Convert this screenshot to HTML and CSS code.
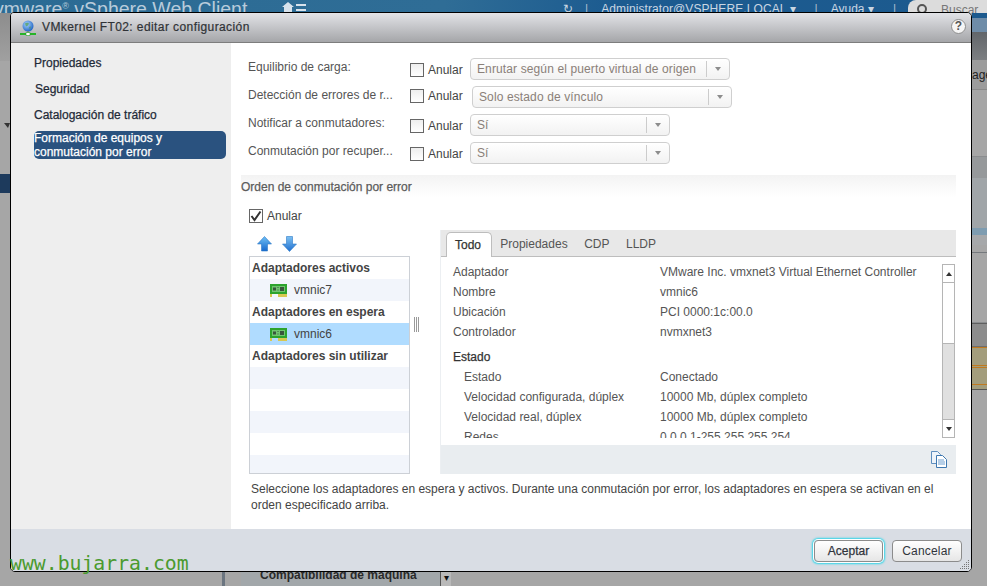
FILE: index.html
```html
<!DOCTYPE html>
<html lang="es">
<head>
<meta charset="utf-8">
<title>VMkernel FT02: editar configuración</title>
<link rel="stylesheet" href="styles.css">
</head>
<body>
<div class="app">
  <header class="topbar">
    <span class="brand"><b class="brand-vm">vmware</b><sup class="brand-r">®</sup> vSphere Web Client</span>
    <svg class="home" width="24" height="12" viewBox="0 0 24 12"><path d="M6 1 L12 6 H10 V12 H2 V6 H0 Z" fill="#d7e2ec"/><path d="M14 3h10v2H14zM14 8h10v2H14z" fill="#d7e2ec"/></svg>
    <span class="top-right">
      <span class="refresh">↻</span><span class="sep">|</span>
      <span class="user">Administrator@VSPHERE.LOCAL ▾</span><span class="sep">|</span>
      <span class="help-menu">Ayuda ▾</span><span class="sep">|</span>
      <span class="search"><svg width="12" height="12" viewBox="0 0 12 12"><circle cx="6" cy="6" r="4" fill="none" stroke="#555" stroke-width="2"/></svg><span class="search-text">Buscar</span></span>
    </span>
  </header>
  <div class="workspace">
    <div class="left-strip">
      <div class="ls-a"></div>
      <div class="ls-tri"></div>
      <div class="ls-b"></div>
      <div class="ls-blue"></div>
    </div>
    <div class="center-back">
      <div class="back-row">
        <span class="back-slate"></span>
        <span class="back-panel">Compatibilidad de máquina</span>
        <span class="back-drop">▾</span>
      </div>
    </div>
    <div class="right-strip">
      <div class="rs-blue"></div>
      <div class="rs-steel"></div>
      <div class="rs-dark"></div>
      <div class="rs-tab">age</div>
      <div class="rs-plain"></div>
      <div class="rs-mid"></div>
      <div class="rs-soft"></div>
      <div class="rs-band"></div>
      <div class="rs-plain2"></div>
      <div class="rs-grey"></div>
      <div class="rs-tan"></div>
    </div>
  </div>
</div>

<section class="dialog">
  <div class="titlebar">
    <svg class="title-icon" width="16" height="16" viewBox="0 0 16 16">
      <defs><radialGradient id="gl" cx="40%" cy="35%" r="70%"><stop offset="0" stop-color="#a8d4ff"/><stop offset="1" stop-color="#1a5fc0"/></radialGradient></defs>
      <circle cx="8" cy="6" r="5.5" fill="url(#gl)"/>
      <path d="M5 3.5c1.5-1 3-.8 4 0l-1 2-2 1zM9 7l2-.5-1 3z" fill="#4f9a4a" opacity=".7"/>
      <path d="M7 11h2v2H7z" fill="#7a8a7a"/>
      <path d="M0 13h16v2H0z" fill="#27b427"/>
      <path d="M6 12.5h4v3H6z" fill="#fff" stroke="#27a027" stroke-width=".6"/>
    </svg>
    <h1 class="title-text">VMkernel FT02: editar configuración</h1>
    <span class="help-btn">?</span>
  </div>

  <div class="dlg-body">
    <nav class="sidebar">
      <a class="nav-item">Propiedades</a>
      <a class="nav-item nav-shift">Seguridad</a>
      <a class="nav-item">Catalogación de tráfico</a>
      <a class="nav-selected">Formación de equipos y conmutación por error</a>
    </nav>

    <main class="main">
      <div class="form">
        <div class="row">
          <label class="row-label">Equilibrio de carga:</label>
          <span class="override"><span class="cb"></span><span class="cb-text">Anular</span></span>
          <span class="select wide"><span class="sel-text">Enrutar según el puerto virtual de origen</span><span class="sel-arrow"></span></span>
        </div>
        <div class="row row-alt">
          <label class="row-label">Detección de errores de r...</label>
          <span class="override"><span class="cb"></span><span class="cb-text">Anular</span></span>
          <span class="select wide"><span class="sel-text">Solo estado de vínculo</span><span class="sel-arrow"></span></span>
        </div>
        <div class="row">
          <label class="row-label">Notificar a conmutadores:</label>
          <span class="override"><span class="cb"></span><span class="cb-text">Anular</span></span>
          <span class="select narrow"><span class="sel-text">Sí</span><span class="sel-arrow"></span></span>
        </div>
        <div class="row">
          <label class="row-label">Conmutación por recuper...</label>
          <span class="override"><span class="cb"></span><span class="cb-text">Anular</span></span>
          <span class="select narrow"><span class="sel-text">Sí</span><span class="sel-arrow"></span></span>
        </div>
      </div>

      <h2 class="section-head">Orden de conmutación por error</h2>

      <div class="override-main">
        <span class="cb cb-on"><svg width="14" height="14" viewBox="0 0 14 14"><path d="M2.5 7 L5.5 11 L11.5 2.5" fill="none" stroke="#333" stroke-width="2"/></svg></span>
        <span class="cb-text">Anular</span>
      </div>

      <div class="split">
        <div class="adapters">
          <div class="arrows">
            <svg width="15" height="16" viewBox="0 0 15 16"><defs><linearGradient id="au" x1="0" y1="0" x2="0" y2="1"><stop offset="0" stop-color="#6fc0f5"/><stop offset="1" stop-color="#1668cc"/></linearGradient></defs><path d="M7.5 .5 L14.5 8 H10.5 V15 H4.5 V8 H.5 Z" fill="url(#au)" stroke="#2b78c8" stroke-width=".6"/></svg>
            <svg width="15" height="16" viewBox="0 0 15 16"><defs><linearGradient id="ad" x1="0" y1="0" x2="0" y2="1"><stop offset="0" stop-color="#7cc0f2"/><stop offset="1" stop-color="#2070d0"/></linearGradient></defs><path d="M4.5 .5 H10.5 V8 H14.5 L7.5 15.5 L.5 8 H4.5 Z" fill="url(#ad)" stroke="#2b78c8" stroke-width=".6"/></svg>
          </div>
          <ul class="list">
            <li class="li-head">Adaptadores activos</li>
            <li class="li-nic li-alt"><svg class="nic" width="17" height="13" viewBox="0 0 17 13"><path d="M0 0h17v10H0z" fill="#2da32d"/><path d="M2 2h13v6H2z" fill="#6fc46f"/><path d="M3 3.500h3v3H3zM7.500 3h1v1h-1zM7.500 5.500h1v1h-1zM10 3h4v4h-4z" fill="#39553c"/><path d="M0 10h2v3H0zM8 10h9v3H8z" fill="#d8c850"/></svg>vmnic7</li>
            <li class="li-head">Adaptadores en espera</li>
            <li class="li-nic li-sel"><svg class="nic" width="17" height="13" viewBox="0 0 17 13"><path d="M0 0h17v10H0z" fill="#2da32d"/><path d="M2 2h13v6H2z" fill="#6fc46f"/><path d="M3 3.500h3v3H3zM7.500 3h1v1h-1zM7.500 5.500h1v1h-1zM10 3h4v4h-4z" fill="#39553c"/><path d="M0 10h2v3H0zM8 10h9v3H8z" fill="#d8c850"/></svg>vmnic6</li>
            <li class="li-head">Adaptadores sin utilizar</li>
            <li class="li-alt"></li>
            <li></li>
            <li class="li-alt"></li>
            <li></li>
            <li class="li-alt"></li>
          </ul>
        </div>

        <div class="gutter"><span class="grip"></span></div>

        <div class="details">
          <div class="tabs">
            <span class="tab tab-on">Todo</span>
            <span class="tab">Propiedades</span>
            <span class="tab">CDP</span>
            <span class="tab">LLDP</span>
          </div>
          <div class="det-content">
            <div class="scroller">
              <dl class="props">
                <dt>Adaptador</dt><dd>VMware Inc. vmxnet3 Virtual Ethernet Controller</dd>
                <dt>Nombre</dt><dd>vmnic6</dd>
                <dt>Ubicación</dt><dd>PCI 0000:1c:00.0</dd>
                <dt>Controlador</dt><dd>nvmxnet3</dd>
              </dl>
              <div class="props-head">Estado</div>
              <dl class="props props-in">
                <dt>Estado</dt><dd>Conectado</dd>
                <dt>Velocidad configurada, dúplex</dt><dd>10000 Mb, dúplex completo</dd>
                <dt>Velocidad real, dúplex</dt><dd>10000 Mb, dúplex completo</dd>
                <dt>Redes</dt><dd>0.0.0.1-255.255.255.254</dd>
              </dl>
            </div>
            <div class="scrollbar">
              <span class="sb-btn"><i class="tri-up"></i></span>
              <span class="sb-thumb"></span>
              <span class="sb-track"></span>
              <span class="sb-btn"><i class="tri-down"></i></span>
            </div>
          </div>
          <div class="det-foot">
            <svg width="16" height="17" viewBox="0 0 16 17"><path d="M.5 .5h6l3 3v9h-9z" fill="#eef4fa" stroke="#5f8fbf"/><path d="M5.500 4.500h6l4 4v8h-10z" fill="#fff" stroke="#3f78b0"/><path d="M7 9h6M7 11h7M7 13h7" stroke="#6f9fcf"/></svg>
          </div>
        </div>
      </div>

      <p class="hint">Seleccione los adaptadores en espera y activos. Durante una conmutación por error, los adaptadores en espera se activan en el orden especificado arriba.</p>
    </main>
  </div>

  <footer class="dlg-foot">
    <button class="btn btn-focus">Aceptar</button>
    <button class="btn">Cancelar</button>
  </footer>
  <svg class="resize" width="10" height="10" viewBox="0 0 10 10"><path d="M8 0h1v1H8zM6 2h1v1H6zM8 2h1v1H8zM4 4h1v1H4zM6 4h1v1H6zM8 4h1v1H8zM2 6h1v1H2zM4 6h1v1H4zM6 6h1v1H6zM8 6h1v1H8zM0 8h1v1H0zM2 8h1v1H2zM4 8h1v1H4zM6 8h1v1H6zM8 8h1v1H8z" fill="#777"/></svg>
</section>

<div class="watermark">www.bujarra.com</div>
</body>
</html>
```
FILE: styles.css
```css
* { box-sizing: border-box; }
html, body { margin: 0; height: 100%; overflow: hidden; }
body { font: 12px/16px "Liberation Sans", Arial, sans-serif; color: #444; background: #a6a6a6; }

/* background application */
.app { display: flex; flex-direction: column; height: 586px; }
.topbar { height: 13px; flex: none; overflow: hidden; display: flex; background: linear-gradient(100deg, #2b6b94 0, #2f6d96 45%, #1c5b90 62%, #1c5a8e 100%); color: #c9d6e2; white-space: nowrap; }
.brand { font-size: 19.5px; line-height: 19px; margin-left: -6px; width: 288px; flex: none; color: #b9cbdb; }
.brand-vm { font-weight: 400; }
.brand-r { font-size: 9px; line-height: 0; }
.home { margin-top: 1px; flex: none; }
.top-right { margin-left: auto; display: flex; font-size: 12px; line-height: 16px; padding-top: 1px; }
.refresh { margin-right: 12px; }
.sep { color: #a9bccd; }
.user { margin: 0 19px 0 13px; letter-spacing: .09px; }
.help-menu { margin: 0 19px 0 13px; }
.search { margin-left: 12px; width: 79px; height: 24px; margin-top: -1px; background: #dcdcdc; border-radius: 8px 0 0 8px; display: flex; padding: 2px 0 0 7px; color: #777; }
.search svg { margin: 1px 0 0 1px; }
.search-text { margin-left: 13px; }

.workspace { flex: 1; display: flex; min-height: 0; }
.left-strip { width: 10px; flex: none; display: flex; flex-direction: column; }
.ls-a { height: 48px; background: linear-gradient(#8d8d8d, #a0a0a0); }
.ls-tri { margin-top: 62px; width: 0; height: 0; align-self: flex-end; border: 5px solid transparent; border-top-color: #333; border-right-width: 2px; border-left-width: 4px; border-bottom-width: 0; }
.ls-b { height: 46px; }
.ls-blue { height: 19px; background: #1d3a5c; }
.center-back { flex: 1; display: flex; flex-direction: column; justify-content: flex-end; }
.back-row { display: flex; height: 14px; overflow: hidden; }
.back-slate { width: 3px; margin-left: 212px; background: #6b7580; }
.back-panel { width: 199px; margin-left: 16px; background: #a2a7aa; padding-left: 19px; font-weight: 700; color: #2a2a2a; line-height: 6px; white-space: nowrap; }
.back-drop { width: 11px; background: #b9b9b9; border-left: 1px solid #555; color: #111; font-size: 10px; line-height: 12px; text-align: center; }
.right-strip { width: 15px; flex: none; display: flex; flex-direction: column; }
.rs-blue { height: 5px; background: #1c5a8e; }
.rs-steel { height: 14px; background: #6e8ca8; }
.rs-dark { height: 28px; background: linear-gradient(#62666a, #7c7f82); }
.rs-tab { height: 30px; background: #9c9c9c; color: #222; line-height: 30px; margin-left: -10px; padding-left: 10px; white-space: nowrap; overflow: hidden; clip-path: inset(0 0 0 10px); border-bottom: 1px solid #8a8a8a; }
.rs-plain { height: 67px; border-bottom: 1px solid #8b8d8f; background: #a6a6a6; }
.rs-mid { height: 21px; background: #96999b; }
.rs-soft { height: 67px; background: linear-gradient(#a0a5a8 0, #a0a5a8 75%, #7e9cb0 75%, #7e9cb0 85%, #a6a8aa 85%); }
.rs-band { height: 8px; border-bottom: 1px solid #75797d; }
.rs-plain2 { height: 70px; border-bottom: 1px solid #8b8d8f; }
.rs-grey { height: 24px; background: #8c8c8c; border-top: 1px solid #5f5f5f; border-bottom: 1px solid #6f6f6f; }
.rs-tan { height: 43px; background: #a39d7c; border-top: 1px solid #c07a20; border-bottom: 1px solid #555; background-image: linear-gradient(transparent 17px, #c07a20 17px, #c07a20 18px, transparent 18px, transparent 19px, #c07a20 19px, #c07a20 20px, transparent 20px, transparent 36px, #c07a20 36px, #c07a20 37px, transparent 37px); }

/* dialog */
.dialog { position: absolute; left: 10px; top: 12px; width: 962px; height: 560px; border: 1px solid #000; border-radius: 4px 5px 5px 5px; overflow: hidden; display: flex; flex-direction: column; background: #fff; }
.titlebar { height: 30px; flex: none; display: flex; align-items: center; background: linear-gradient(#e2e3e7, #a5a6a9); border-bottom: 1px solid #7d7d7d; padding: 0 5px 2px 9px; }
.title-icon { flex: none; margin-top: 3px; }
.title-text { margin: 0 0 0 6px; font-size: 12px; font-weight: 400; color: #2f3236; letter-spacing: .41px; -webkit-text-stroke: .2px #2f3236; flex: 1; }
.help-btn { width: 15px; height: 15px; border: 1.5px solid #8e8e8e; border-radius: 50%; background: #f5f5f5; color: #555; font-weight: 700; font-size: 12px; line-height: 12px; text-align: center; }

.dlg-body { flex: 1; display: flex; min-height: 0; }
.sidebar { width: 220px; flex: none; background: #eee; padding: 7px 5px 0 23px; display: flex; flex-direction: column; color: #1f2a38; }
.nav-item { height: 26px; line-height: 26px; -webkit-text-stroke: .25px #1f2a38; }
.nav-shift { padding-left: 1px; }
.nav-selected { margin-top: 3px; height: 28px; background: #2a527f; border-radius: 5px; color: #fff; line-height: 14px; -webkit-text-stroke: .25px #fff; }

.main { flex: 1; min-width: 0; padding: 15px 15px 0 10px; display: flex; flex-direction: column; background: #fff; }
.form { padding-left: 7px; display: flex; flex-direction: column; gap: 6px; }
.row { display: flex; height: 22px; }
.row-label { width: 162px; flex: none; padding-top: 1px; color: #555; }
.override { width: 60px; flex: none; display: flex; align-items: center; gap: 4px; padding-top: 2px; }
.cb { width: 14px; height: 14px; flex: none; display: block; border: 1px solid #666; background: linear-gradient(#eee, #fff); }
.cb-text { color: #444; }
.row-alt .override { padding-top: 0; margin-top: -1px; height: 22px; width: 62px; }
.select { height: 22px; display: flex; border: 1px solid #cfcfcf; border-radius: 4px; background: linear-gradient(#fff, #f2f2f2); color: #8a8078; align-items: center; }
.wide { width: 260px; }
.narrow { width: 200px; }
.sel-text { flex: 1; padding-left: 6px; letter-spacing: .12px; white-space: nowrap; overflow: hidden; }
.sel-arrow { width: 23px; height: 16px; border-left: 1px solid #ccc; position: relative; flex: none; }
.sel-arrow::after { content: ""; position: absolute; left: 8px; top: 6px; border: 3.5px solid transparent; border-top: 4px solid #8d8d8d; border-bottom: 0; }

.section-head { margin: 11px 0 0; height: 22px; line-height: 24px; font-size: 12px; font-weight: 400; color: #5c5c5c; -webkit-text-stroke: .25px #5c5c5c; background: linear-gradient(#f3f3f3, #fff); }

.override-main { margin: 12px 0 0 8px; height: 14px; display: flex; align-items: center; gap: 4px; }
.cb-on { background: #fff; }
.cb-on svg { display: block; margin: -1px; }

.split { margin-top: 7px; height: 244px; display: flex; flex: none; }
.adapters { margin-left: 8px; width: 161px; flex: none; display: flex; flex-direction: column; }
.arrows { height: 26px; flex: none; padding: 6px 0 0 8px; display: flex; gap: 10px; }
.list { margin: 0; padding: 0; list-style: none; height: 218px; border: 1px solid #ccd0d6; overflow: hidden; }
.list li { height: 22px; line-height: 22px; padding-left: 2px; }
.li-head { font-weight: 700; color: #444; }
.list .li-nic { padding-left: 20px; display: flex; align-items: center; color: #444; }
.nic { margin-right: 7px; flex: none; margin-top: 1px; }
.li-alt { background: #f2f5fb; }
.li-sel { background: #b0dcff; }
.gutter { width: 30px; flex: none; padding: 87px 0 0 4px; }
.grip { display: block; width: 5px; height: 15px; background: repeating-linear-gradient(90deg, #9a9a9a 0, #9a9a9a 1px, #fff 1px, #fff 2px); }
.details { flex: 1; min-width: 0; display: flex; flex-direction: column; border-left: 1px solid #eceff2; }
.tabs { height: 27px; flex: none; display: flex; background: #e8e8e8; border-bottom: 1px solid #bdbdbd; padding: 2px 0 0 5px; color: #555; }
.tab { line-height: 22px; padding: 1px 8.25px 0; }
.tab-on { width: 46px; height: 25px; background: #fff; border: 1px solid #bdbdbd; border-bottom: 0; border-radius: 5px 5px 0 0; color: #333; padding: 1px 0 0 8px; -webkit-text-stroke: .25px #333; }
.det-content { flex: 1; min-height: 0; display: flex; overflow: hidden; }
.scroller { flex: 1; min-width: 0; overflow: hidden; margin-bottom: 7px; padding: 5px 0 0 12px; color: #555; }
.props { margin: 0; display: grid; grid-template-columns: 207px 1fr; }
.props dt, .props dd { margin: 0; line-height: 20px; white-space: nowrap; }
.props-in dt { padding-left: 11px; }
.props-head { margin-top: 5px; line-height: 20px; color: #333; -webkit-text-stroke: .25px #333; }
.scrollbar { width: 13px; flex: none; margin: 7px 1px 7px 0; display: flex; flex-direction: column; border: 1px solid #b5b5b5; }
.sb-btn { height: 17px; flex: none; background: #fff; display: flex; align-items: center; justify-content: center; }
.sb-thumb { height: 62px; flex: none; background: #fff; border-top: 1px solid #b5b5b5; border-bottom: 1px solid #b5b5b5; }
.sb-track { flex: 1; background: #e0e0e0; border-bottom: 1px solid #b5b5b5; }
.tri-up { border: 3.5px solid transparent; border-bottom: 4px solid #333; border-top: 0; }
.tri-down { border: 3.5px solid transparent; border-top: 4px solid #333; border-bottom: 0; }
.det-foot { height: 29px; flex: none; background: #e9edf0; padding: 6px 9px 0 0; text-align: right; }
.hint { margin: 7px 0 0; padding: 0 10px; line-height: 16px; color: #444; }

.dlg-foot { height: 42px; flex: none; background: #d9dde4; padding: 11px 9px 0 0; display: flex; justify-content: flex-end; gap: 9px; }
.btn { height: 22px; padding: 0; font: 12px/20px "Liberation Sans", Arial, sans-serif; border: 1px solid #8c8c8c; border-radius: 4px; background: linear-gradient(#fff, #e6e6e6); color: #30343c; }
.btn-focus { width: 69px; box-shadow: 0 0 0 1px #fff, 0 0 2px 2px #2fd4e8; -webkit-text-stroke: .25px #30343c; }
.btn:not(.btn-focus) { width: 70px; letter-spacing: .2px; }
.resize { position: absolute; right: 1px; bottom: 1px; }

.watermark { position: absolute; left: 10px; top: 552px; font: 19.8px/24px "DejaVu Sans Mono", monospace; color: #4a9a2e; white-space: nowrap; }
```
